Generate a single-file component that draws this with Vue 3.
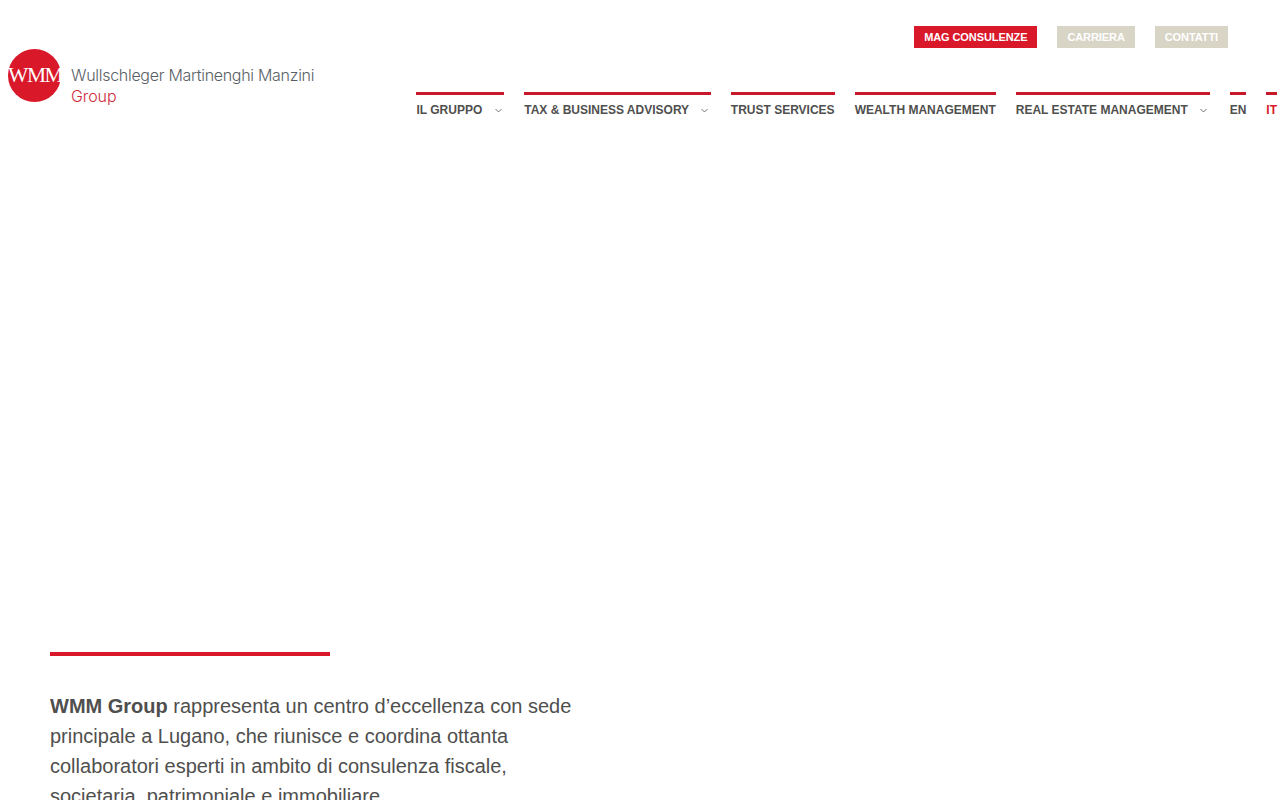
<script setup>
const topLinks = [
    { label: 'MAG CONSULENZE', active: true },
    { label: 'CARRIERA', active: false },
    { label: 'CONTATTI', active: false },
];

const menu = [
    { label: 'IL GRUPPO', sub: true },
    { label: 'TAX & BUSINESS ADVISORY', sub: true },
    { label: 'TRUST SERVICES' },
    { label: 'WEALTH MANAGEMENT' },
    { label: 'REAL ESTATE MANAGEMENT', sub: true },
    { label: 'EN' },
    { label: 'IT', current: true },
];
</script>

<template>
    <div class="page">
        <header class="header">
            <a class="logo" href="#">
                <span class="logo-mark">WMM</span>
                <span class="logo-text">
                    <span class="logo-name">Wullschleger Martinenghi Manzini</span>
                    <span class="logo-group">Group</span>
                </span>
            </a>

            <div class="header-right">
                <div class="top-links">
                    <a
                        v-for="link in topLinks"
                        :key="link.label"
                        href="#"
                        class="top-link"
                        :class="{ active: link.active }"
                    >{{ link.label }}</a>
                </div>

                <nav class="menu">
                    <a
                        v-for="item in menu"
                        :key="item.label"
                        href="#"
                        class="menu-item"
                        :class="{ current: item.current }"
                    >
                        {{ item.label }}
                        <svg v-if="item.sub" class="chevron" width="7" height="5" viewBox="0 0 7 5">
                            <path d="M0.5 1 L3.5 4 L6.5 1" fill="none" stroke="#777" stroke-width="1" />
                        </svg>
                    </a>
                </nav>
            </div>
        </header>

        <main class="intro">
            <div class="rule"></div>
            <p>
                <strong>WMM Group</strong> rappresenta un centro d’eccellenza con sede
                principale a Lugano, che riunisce e coordina ottanta
                collaboratori esperti in ambito di consulenza fiscale,
                societaria, patrimoniale e immobiliare.
            </p>
        </main>
    </div>
</template>

<style>
html,
body {
    overflow-x: hidden;
    background: #fff;
}
</style>

<style scoped>
.page {
    font-family: "Liberation Sans", Arial, sans-serif;
    color: #4f4f4e;
    width: 1280px;
}

.header {
    display: flex;
    justify-content: space-between;
    height: 652px;
    box-sizing: border-box;
    padding: 26px 3px 0 8px;
}

a {
    text-decoration: none;
}

.logo {
    display: flex;
    align-items: flex-start;
    gap: 10px;
    margin-top: 23px;
    height: 54px;
}

.logo-mark {
    width: 53px;
    height: 53px;
    border-radius: 50%;
    background: #d9182a;
    color: #fff;
    font-family: "Liberation Serif", serif;
    font-size: 21.5px;
    line-height: 53px;
    letter-spacing: -1.4px;
    text-align: center;
    white-space: nowrap;
}

.logo-text {
    display: flex;
    flex-direction: column;
    font-family: Inter, "Liberation Sans", sans-serif;
    font-weight: 300;
    font-size: 16px;
    line-height: 21px;
    padding-top: 16px;
}

.logo-name {
    color: #5a5f66;
    white-space: nowrap;
    letter-spacing: -0.29px;
}

.logo-group {
    color: #cf2a3e;
    letter-spacing: -0.1px;
}

.header-right {
    display: flex;
    flex-direction: column;
    align-items: flex-end;
}

.top-links {
    display: flex;
    gap: 20px;
    margin-right: 49px;
}

.top-link {
    background: #d8d4c6;
    color: #fff;
    font-size: 11px;
    font-weight: 700;
    letter-spacing: -0.09px;
    line-height: 22px;
    padding: 0 10px;
}

.top-link.active {
    background: #d9182a;
}

.menu {
    display: flex;
    gap: 20px;
    margin-top: 44px;
}

.menu-item {
    border-top: 3px solid #c8192b;
    color: #4f4f4e;
    font-size: 12px;
    font-weight: 700;
    line-height: 14px;
    padding-top: 8px;
    white-space: nowrap;
}

.menu-item.current {
    color: #d9182a;
}

.chevron {
    margin-left: 9px;
    margin-right: 2.6px;
    vertical-align: 1px;
}

.intro {
    padding: 0 50px 60px;
}

.rule {
    width: 280px;
    height: 4px;
    background: #d9182a;
}

.intro p {
    width: 540px;
    margin: 35px 0 0;
    font-size: 20px;
    line-height: 30px;
}

.intro strong {
    font-weight: 700;
}
</style>
